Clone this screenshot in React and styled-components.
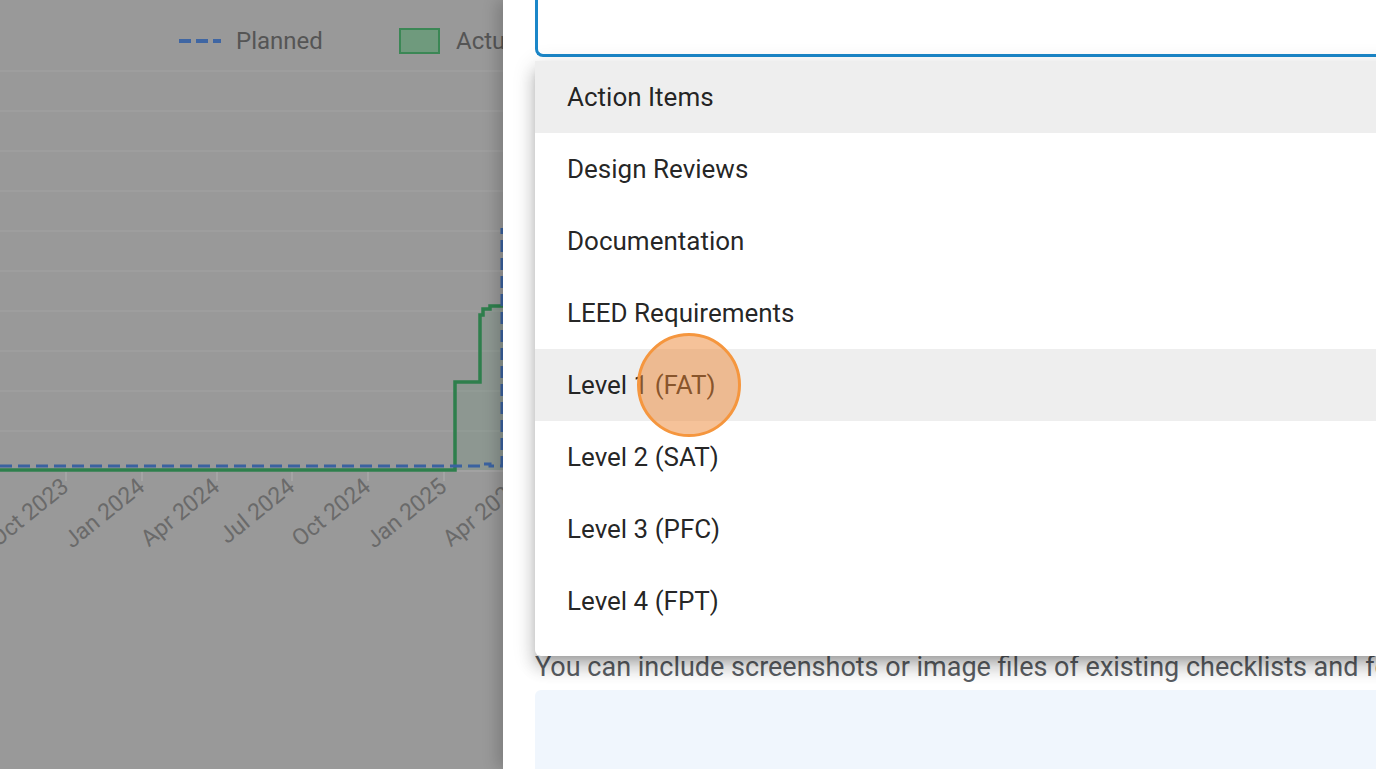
import React from 'react';
import styled, { createGlobalStyle } from 'styled-components';

const GlobalStyle = createGlobalStyle`
  html, body {
    margin: 0;
    padding: 0;
    height: 100%;
    overflow: hidden;
    font-family: Roboto, 'Liberation Sans', Arial, sans-serif;
  }
  #root {
    height: 100%;
  }
`;

const Page = styled.div`
  display: flex;
  width: 1376px;
  height: 769px;
  overflow: hidden;
`;

const ChartPane = styled.div`
  width: 503px;
  flex-shrink: 0;
  background: #999999;
  overflow: hidden;
`;

const Drawer = styled.div`
  position: relative;
  flex: 1;
  background: #ffffff;
  padding-left: 32px;
  box-shadow: -6px 0 14px rgba(0, 0, 0, 0.18);
  z-index: 1;
`;

const InputBox = styled.div`
  margin-top: -20px;
  height: 71px;
  border: 3px solid #1b87c9;
  border-right: none;
  border-radius: 0 0 0 8px;
`;

const HelperText = styled.p`
  margin: 595px 0 0;
  font-size: 27px;
  line-height: 30px;
  color: #5a5e63;
  white-space: nowrap;
`;

const DropZone = styled.div`
  margin-top: 8px;
  height: 120px;
  background: #f0f6fd;
  border-radius: 6px 0 0 6px;
`;

const Menu = styled.ul`
  position: absolute;
  top: 61px;
  left: 32px;
  right: -20px;
  margin: 0;
  padding: 0 0 19px;
  list-style: none;
  background: #ffffff;
  border-radius: 6px;
  box-shadow: 0 7px 8px -4px rgba(0, 0, 0, 0.2), 0 12px 15px 2px rgba(0, 0, 0, 0.14),
    0 5px 21px 3px rgba(0, 0, 0, 0.12);
`;

const MenuItem = styled.li`
  display: flex;
  align-items: center;
  height: 72px;
  padding-left: 32px;
  font-size: 26px;
  color: rgba(0, 0, 0, 0.87);
  background: ${(p) => (p.$active ? '#eeeeee' : 'transparent')};
`;

const ClickMarker = styled.div`
  position: absolute;
  left: 134px;
  top: 333px;
  width: 104px;
  height: 104px;
  box-sizing: border-box;
  border-radius: 50%;
  border: 3px solid #f5963e;
  background: rgba(235, 133, 52, 0.5);
  pointer-events: none;
`;

const items = [
  'Action Items',
  'Design Reviews',
  'Documentation',
  'LEED Requirements',
  'Level 1 (FAT)',
  'Level 2 (SAT)',
  'Level 3 (PFC)',
  'Level 4 (FPT)',
];

const ticks = [
  { x: 66, label: 'Oct 2023' },
  { x: 142, label: 'Jan 2024' },
  { x: 217, label: 'Apr 2024' },
  { x: 292, label: 'Jul 2024' },
  { x: 368, label: 'Oct 2024' },
  { x: 444, label: 'Jan 2025' },
  { x: 519, label: 'Apr 2025' },
];

const gridYs = [71, 111, 151, 191, 231, 271, 311, 351, 391, 431];

function ProgressChart() {
  const actual = 'M0 470 H455 V382 H480 V315 H483 V309 H490 V306 H510';
  return (
    <svg width="503" height="560" viewBox="0 0 503 560" style={{ display: 'block' }}>
      {/* legend */}
      <line x1="179" y1="41" x2="221" y2="41" stroke="#3f66a3" strokeWidth="4" strokeDasharray="12 5" />
      <text x="236" y="49" fontSize="24" fill="#555" fontFamily="Roboto, sans-serif">Planned</text>
      <rect x="400" y="29" width="39" height="24" fill="#6f9a7d" stroke="#3b8755" strokeWidth="2" />
      <text x="456" y="49" fontSize="24" fill="#555" fontFamily="Roboto, sans-serif">Actual</text>

      {gridYs.map((y) => (
        <line key={y} x1="0" y1={y} x2="503" y2={y} stroke="#a1a1a1" strokeWidth="1.5" />
      ))}
      <line x1="0" y1="471" x2="503" y2="471" stroke="#a6a6a6" strokeWidth="1.5" />

      {ticks.map((t) => (
        <g key={t.label}>
          <line x1={t.x} y1="471" x2={t.x} y2="481" stroke="#a8a8a8" strokeWidth="1.5" />
          <text
            x={t.x + 4}
            y="489"
            fontSize="23"
            fill="#6a6a6a"
            textAnchor="end"
            fontFamily="Roboto, sans-serif"
            transform={`rotate(-39 ${t.x + 4} 489)`}
          >
            {t.label}
          </text>
        </g>
      ))}

      {/* actual fill + line */}
      <path d={`${actual} V470 Z`} fill="rgba(60, 140, 90, 0.12)" />
      <path d={actual} fill="none" stroke="#2e7f4c" strokeWidth="3.5" />

      {/* planned */}
      <path
        d="M0 466 H484 V464 H490 V466 H502 V228"
        fill="none"
        stroke="#3a62a0"
        strokeWidth="3"
        strokeDasharray="12 6"
      />
    </svg>
  );
}

export default function App() {
  return (
    <>
      <GlobalStyle />
      <Page>
        <ChartPane>
          <ProgressChart />
        </ChartPane>
        <Drawer>
          <InputBox />
          <HelperText>You can include screenshots or image files of existing checklists and forms to help build your template.</HelperText>
          <DropZone />
          <Menu>
            {items.map((label, i) => (
              <MenuItem key={label} $active={i === 0 || i === 4}>
                {label}
              </MenuItem>
            ))}
          </Menu>
          <ClickMarker />
        </Drawer>
      </Page>
    </>
  );
}
